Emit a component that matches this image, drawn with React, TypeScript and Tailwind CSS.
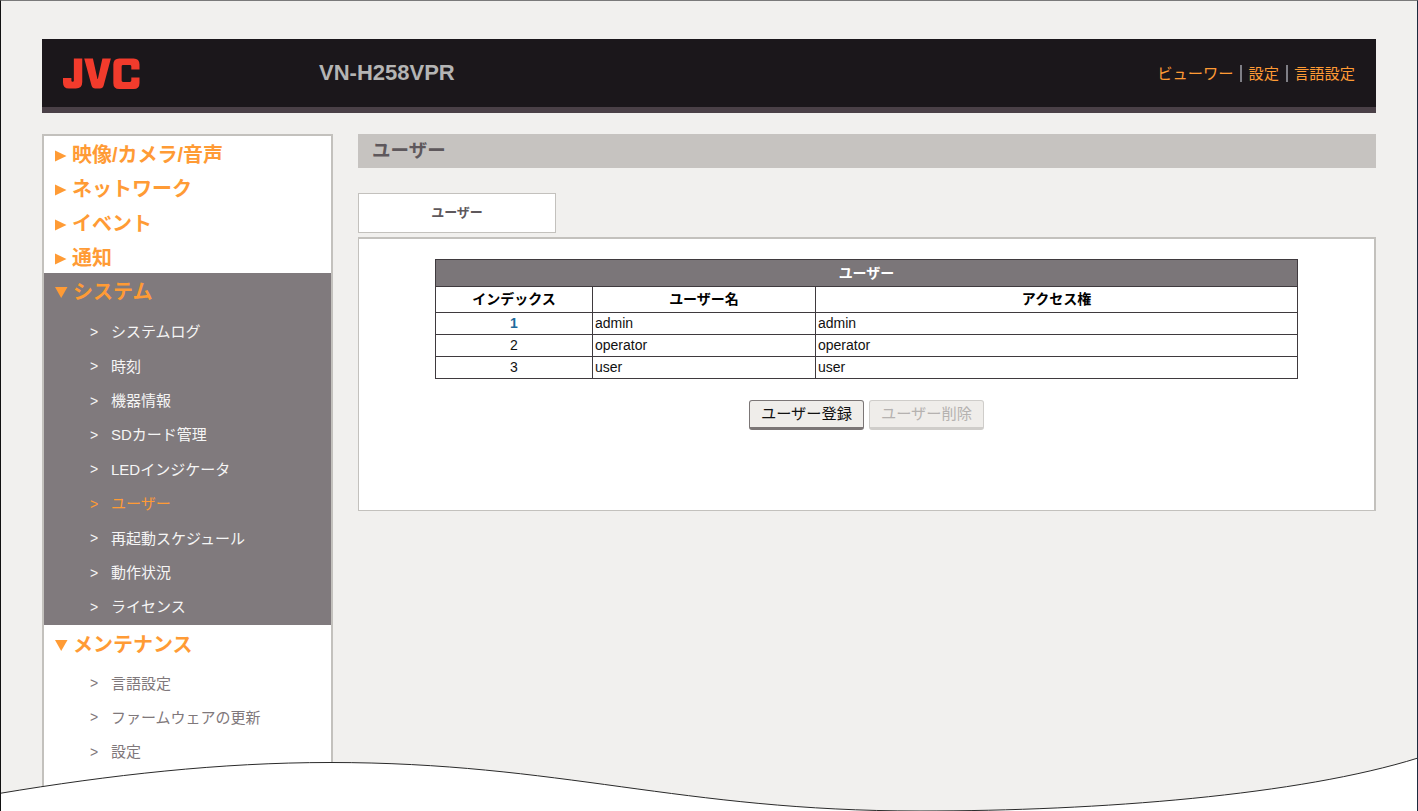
const jp = 'font-["Liberation_Sans","Noto_Sans_CJK_JP",sans-serif]';

function Tri({ down }: { down?: boolean }) {
  return down ? (
    <svg width="13" height="12" viewBox="0 0 13 12" className="shrink-0 mr-[5px]">
      <polygon points="0,1 12.5,1 6.2,12" fill="#ff9b35" />
    </svg>
  ) : (
    <svg width="12" height="12" viewBox="0 0 12 12" className="shrink-0 mr-[5px] mt-[2px]">
      <polygon points="0,0.5 11.5,6 0,11.5" fill="#ff9b35" />
    </svg>
  );
}

function Head({ label, down, box }: { label: string; down?: boolean; box: string }) {
  return (
    <div className={`flex items-center pl-[11px] text-[20px] font-bold leading-none text-[#ff9b35] ${box}`}>
      <Tri down={down} />
      <span>{label}</span>
    </div>
  );
}

function Sub({ label, tone }: { label: string; tone: string }) {
  return (
    <div className={`flex items-center h-[34.4px] pl-[45px] text-[15px] leading-none ${tone}`}>
      <span className="w-[22px] text-[14px] pl-px">&gt;</span>
      <span>{label}</span>
    </div>
  );
}

const sys = ["システムログ", "時刻", "機器情報", "SDカード管理", "LEDインジケータ", "ユーザー", "再起動スケジュール", "動作状況", "ライセンス"];
const maint = ["言語設定", "ファームウェアの更新", "設定"];
const rows = [
  ["1", "admin", "admin"],
  ["2", "operator", "operator"],
  ["3", "user", "user"],
];

function JvcLogo() {
  return (
    <svg width="77" height="31" viewBox="0 0 78 31" preserveAspectRatio="none" className="block">
      <g fill="#f23b2c">
        <path d="M11 0.5h8.5v23.5q0 6.5-6.5 6.5H6q-6 0-6-6v-4.5h8.5v2.5q0 1.200 1.200 1.200h0.200q1.100 0 1.100-1.200z" />
        <path d="M21.500 0.5h8.800l4.600 20.500h0.400l4.600-20.500h8.600l-7.300 27q-0.800 3-3.800 3h-4.700q-3 0-3.800-3z" />
        <path d="M57 0.5h14.500q6 0 6 6v5h-8.300v-3q0-1.400-1.400-1.400h-7q-1.400 0-1.400 1.400v14q0 1.400 1.400 1.400h7q1.400 0 1.400-1.400v-3h8.300v5.500q0 6-6 6H57q-6 0-6-6v-18.500q0-6 6-6z" />
      </g>
    </svg>
  );
}

export default function App() {
  return (
    <div className={`relative w-[1418px] h-[811px] overflow-hidden bg-[#f1f0ee] border-t border-t-[#7a7a7a] border-l border-r border-l-[#111111] border-r-[#1c2b3e] ${jp}`}>
      <div className="absolute left-[-1px] top-[320px] w-px h-[500px] bg-[#1c2b3e]" />
      <div className="pt-[38px] px-[41px]">
        <header className="h-[74px] bg-[#1b171b] border-b-[6px] border-[#4a4047] flex items-center pl-[21px] pr-[21px]">
          <div className="w-[256px] shrink-0">
            <JvcLogo />
          </div>
          <div className="text-[22px] font-bold text-[#b4b4b4] leading-none">VN-H258VPR</div>
          <div className="ml-auto pt-[1px] flex items-center text-[15.25px] leading-none text-[#ff9b35]">
            <span>ビューワー</span>
            <span className="w-[2px] h-[17px] bg-[#7f7f86] ml-[6.5px] mr-[6.5px]" />
            <span>設定</span>
            <span className="w-[2px] h-[17px] bg-[#7f7f86] ml-[6.5px] mr-[6.5px]" />
            <span>言語設定</span>
          </div>
        </header>

        <div className="flex items-start mt-[21px]">
          <nav className="w-[291px] shrink-0 h-[720px] bg-white border-2 border-[#c3c1bd]">
            <Head label="映像/カメラ/音声" box="h-[34.25px] pt-[4px]" />
            <Head label="ネットワーク" box="h-[34.25px] pt-[4px]" />
            <Head label="イベント" box="h-[34.25px] pt-[4px]" />
            <Head label="通知" box="h-[34.25px] pt-[4px]" />
            <div className="bg-[#807a7d] pb-[0.8px]">
              <Head label="システム" down box="h-[41.6px] pb-[3px]" />
              {sys.map((s) => (
                <Sub key={s} label={s} tone={s === "ユーザー" ? "text-[#ff9b35]" : "text-[#f5f5f5]"} />
              ))}
            </div>
            <Head label="メンテナンス" down box="h-[41px]" />
            {maint.map((s) => (
              <Sub key={s} label={s} tone="text-[#7f787b]" />
            ))}
          </nav>

          <main className="ml-[25px] flex-1 min-w-0">
            <div className="h-[34px] bg-[#c6c3c0] flex items-center pl-[14px] text-[18.5px] font-bold leading-none text-[#5e585c]">
              ユーザー
            </div>
            <div className="mt-[25px] w-[198px] h-[40px] bg-white border border-[#c3c1bd] pb-[2px] flex items-center justify-center text-[13px] font-bold leading-none text-[#5e585c]">
              ユーザー
            </div>
            <div className="mt-[4px] h-[274px] bg-white border-l border-b border-t-2 border-r-2 border-[#c3c1bd] pt-[20px]">
              <table className="w-[863px] ml-[76px] border-collapse table-fixed text-[14px] leading-none text-[#111]">
                <colgroup>
                  <col className="w-[157px]" />
                  <col className="w-[223px]" />
                  <col />
                </colgroup>
                <thead>
                  <tr className="h-[27px]">
                    <th colSpan={3} className="border border-[#3f3a3e] bg-[#7b7679] text-white text-[14px] font-bold">
                      ユーザー
                    </th>
                  </tr>
                  <tr className="h-[26px] text-black text-[14px] font-bold">
                    <th className="border border-[#3f3a3e] pb-[2px]">インデックス</th>
                    <th className="border border-[#3f3a3e] pb-[2px]">ユーザー名</th>
                    <th className="border border-[#3f3a3e] pb-[2px]">アクセス権</th>
                  </tr>
                </thead>
                <tbody>
                  {rows.map((r) => (
                    <tr key={r[0]} className="h-[22px]">
                      <td className={`border border-[#3f3a3e] text-center pb-[2px] ${r[0] === "1" ? "text-[#1f6a9c] font-bold" : ""}`}>{r[0]}</td>
                      <td className="border border-[#3f3a3e] pl-[2px] pb-[2px]">{r[1]}</td>
                      <td className="border border-[#3f3a3e] pl-[2px] pb-[2px]">{r[2]}</td>
                    </tr>
                  ))}
                </tbody>
              </table>
              <div className="mt-[21px] flex justify-center gap-[5px]">
                <button className="w-[115px] h-[30px] rounded-[3px] bg-[#efedea] border border-[#7b7676] border-b-[3px] text-[15.25px] leading-none text-[#111]">
                  ユーザー登録
                </button>
                <button disabled className="w-[115px] h-[30px] rounded-[3px] bg-[#efedea] border border-[#cfcdca] border-b-[3px] text-[15.25px] leading-none text-[#b5b2b0]">
                  ユーザー削除
                </button>
              </div>
            </div>
          </main>
        </div>
      </div>

      <svg width="1418" height="811" viewBox="0 0 1418 811" className="absolute left-[-1px] top-[-1px] pointer-events-none">
        <path d="M-1,793.500 C110,775 220,762.500 330,762.500 C560,762.500 680,811 920,811 C1100,811 1300,795 1418,758 L1418,812 L-1,812 Z" fill="#ffffff" stroke="#2a2a2a" strokeWidth="1" />
      </svg>
    </div>
  );
}
